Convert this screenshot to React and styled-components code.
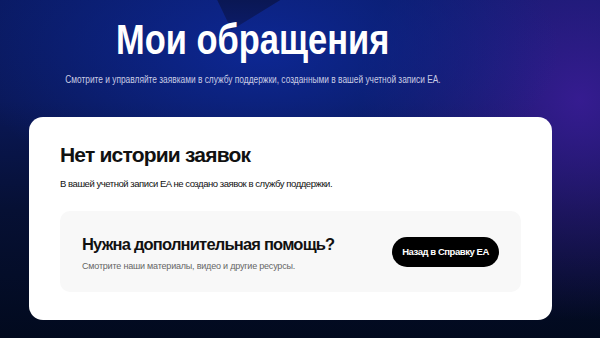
import React from 'react';
import styled, { createGlobalStyle } from 'styled-components';

const GlobalStyle = createGlobalStyle`
  html, body {
    margin: 0;
    padding: 0;
    background: #020a1e;
  }
  * {
    box-sizing: border-box;
  }
`;

function App() {
  return (
    <Page>
      <GlobalStyle />
      <Hero>
        <Title>Мои обращения</Title>
        <Lead>
          Смотрите и управляйте заявками в службу поддержки, созданными в вашей учетной записи EA.
        </Lead>
      </Hero>
      <Card>
        <CardTitle>Нет истории заявок</CardTitle>
        <CardText>В вашей учетной записи EA не создано заявок в службу поддержки.</CardText>
        <HelpBox>
          <HelpCopy>
            <HelpTitle>Нужна дополнительная помощь?</HelpTitle>
            <HelpText>Смотрите наши материалы, видео и другие ресурсы.</HelpText>
          </HelpCopy>
          <BackButton>Назад в Справку EA</BackButton>
        </HelpBox>
      </Card>
    </Page>
  );
}

export default App;

const Page = styled.div`
  position: relative;
  width: 600px;
  height: 338px;
  overflow: hidden;
  display: flex;
  flex-direction: column;
  align-items: flex-start;
  font-family: 'Liberation Sans', Arial, sans-serif;
  background:
    radial-gradient(ellipse 300px 150px at 260px 50px, rgba(13, 40, 150, 0.95), rgba(13, 40, 150, 0) 100%),
    radial-gradient(ellipse 220px 220px at 580px 100px, rgba(58, 28, 150, 0.9), rgba(58, 28, 150, 0) 100%),
    linear-gradient(180deg, #0a1a62 0%, #0a1858 30%, #061034 62%, #020a1e 100%);

  &::before {
    content: '';
    position: absolute;
    top: 0;
    left: 210px;
    width: 80px;
    height: 40px;
    background: linear-gradient(180deg, #0a1754, #0c1d70);
    clip-path: polygon(9% 0, 88% 0, 27% 75%);
  }
`;

const Hero = styled.header`
  position: relative;
  width: 506px;
  display: flex;
  flex-direction: column;
  align-items: center;
  padding-top: 15px;
`;

const Title = styled.h1`
  margin: 0;
  font-size: 42px;
  line-height: 50px;
  font-weight: 700;
  color: #ffffff;
  white-space: nowrap;
  transform: scaleX(0.82);
`;

const Lead = styled.p`
  margin: 8px 0 0;
  font-size: 10.2px;
  line-height: 14px;
  color: #c9cce4;
  white-space: nowrap;
  transform: scaleX(0.82);
`;

const Card = styled.section`
  position: relative;
  width: 523px;
  margin: 30px 0 0 29px;
  padding: 25px 31px 28px;
  border-radius: 14px;
  background: #ffffff;
`;

const CardTitle = styled.h2`
  margin: 0;
  font-size: 21px;
  line-height: 26px;
  font-weight: 700;
  letter-spacing: -0.8px;
  color: #111111;
`;

const CardText = styled.p`
  margin: 10px 0 0;
  font-size: 9.5px;
  line-height: 12px;
  letter-spacing: -0.45px;
  color: #111111;
`;

const HelpBox = styled.div`
  display: flex;
  align-items: center;
  justify-content: space-between;
  height: 81px;
  margin-top: 21px;
  padding: 2px 22px 0;
  border-radius: 10px;
  background: #f8f8f8;
`;

const HelpCopy = styled.div`
  display: flex;
  flex-direction: column;
`;

const HelpTitle = styled.h3`
  margin: 0;
  font-size: 16.5px;
  line-height: 20px;
  font-weight: 700;
  letter-spacing: -0.8px;
  color: #111111;
`;

const HelpText = styled.p`
  margin: 6px 0 0;
  font-size: 9px;
  line-height: 12px;
  letter-spacing: -0.2px;
  color: #666666;
`;

const BackButton = styled.button`
  width: 107px;
  height: 30px;
  margin-top: -2px;
  border: none;
  border-radius: 15px;
  background: #000000;
  color: #ffffff;
  font-family: inherit;
  font-size: 9.5px;
  font-weight: 700;
  letter-spacing: -0.45px;
  white-space: nowrap;
  cursor: pointer;
`;
